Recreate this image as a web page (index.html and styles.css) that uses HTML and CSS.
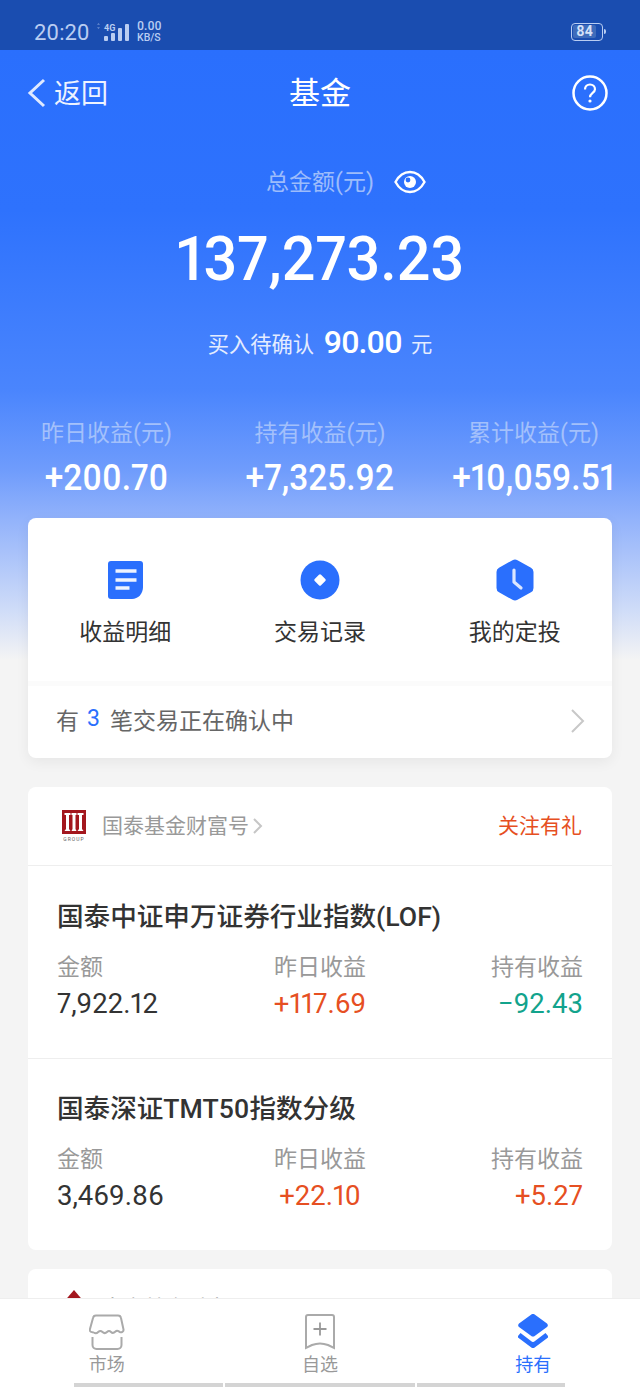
FILE: index.html
```html
<!DOCTYPE html>
<html lang="zh-CN">
<head>
<meta charset="utf-8">
<title>基金</title>
<link rel="stylesheet" href="styles.css">
</head>
<body>
<div class="phone">
  <div class="statusbar">
    <div class="status-left">
      <span class="clock">20:20</span>
      <svg class="signal" width="36" height="20" viewBox="0 0 36 20">
        <path class="sig-arrow" d="M1 2.800 2.500 1 4 2.800zM1 5.200 2.500 7 4 5.200z"/>
        <rect x="8" y="14" width="4" height="5" rx="1"/><rect x="15" y="11" width="4" height="8" rx="1"/><rect x="22" y="6" width="4" height="13" rx="1"/><rect x="29" y="2" width="4" height="17" rx="1"/>
        <text x="8" y="9" class="sig-text">4G</text>
      </svg>
      <span class="speed"><span>0.00</span><span class="speed-unit">KB/S</span></span>
    </div>
    <div class="battery"><span class="battery-level">84</span></div>
  </div>

  <main class="content">
    <header class="nav">
      <div class="nav-back">
        <svg width="20" height="30" viewBox="0 0 20 30"><path d="M18 2 4 15l14 13" fill="none" stroke="#dfe9ff" stroke-width="3"/></svg>
        <span class="nudge-up">返回</span>
      </div>
      <div class="nav-title">基金</div>
      <svg class="nav-help" width="36" height="36" viewBox="0 0 36 36">
        <circle cx="18" cy="18" r="16.500" fill="none" stroke="#fff" stroke-width="2.500"/>
        <path d="M13 14.500c0-3 2.200-5 5-5s5 2 5 4.700c0 3.600-5 3.800-5 8" fill="none" stroke="#fff" stroke-width="2.200"/>
        <circle cx="18" cy="26" r="1.600" fill="#fff"/>
      </svg>
    </header>

    <section class="summary">
      <div class="total-label">
        <span class="nudge-up">总金额(元)</span>
        <svg width="32" height="26" viewBox="0 0 32 26">
          <path d="M1.500 13C5 6.500 10 3 16 3s11 3.500 14.500 10C27 19.500 22 23 16 23S5 19.500 1.500 13z" fill="none" stroke="#fff" stroke-width="2.400"/>
          <circle cx="16" cy="13" r="6" fill="#fff"/><circle cx="14" cy="11" r="2.400" fill="#2a6ffd"/>
        </svg>
      </div>
      <div class="amount"><span class="amount-num">137,273.23</span></div>
      <div class="pending"><span>买入待确认</span><span class="pending-num">90.00</span><span>元</span></div>
    </section>

    <section class="stats">
      <div class="stat"><div class="stat-label">昨日收益(元)</div><div class="stat-value"><span>+200.70</span></div></div>
      <div class="stat"><div class="stat-label">持有收益(元)</div><div class="stat-value"><span>+7,325.92</span></div></div>
      <div class="stat"><div class="stat-label">累计收益(元)</div><div class="stat-value"><span>+10,059.51</span></div></div>
    </section>

    <section class="card actions-card">
      <div class="actions">
        <div class="action">
          <svg width="38" height="42" viewBox="-1 0 38 42"><path d="M4 2h29a3 3 0 0 1 3 3v23c0 7-5 12-11 12H4a3 3 0 0 1-3-3V5a3 3 0 0 1 3-3z" fill="#2a6ffd"/><path d="M8.500 12h21M8.500 21h21M8.500 29h14" stroke="#fff" stroke-width="3.400" opacity=".92"/></svg>
          <span>收益明细</span>
        </div>
        <div class="action">
          <svg width="40" height="42" viewBox="0 0 40 42"><circle cx="20" cy="21" r="19.500" fill="#2a6ffd"/><rect x="15.500" y="16.500" width="9" height="9" rx="1.500" fill="#fff" transform="rotate(45 20 21)"/></svg>
          <span>交易记录</span>
        </div>
        <div class="action">
          <svg width="38" height="42" viewBox="0 0 38 42"><path d="M16.500 1.200a5 5 0 0 1 5 0l13.500 7.600a5 5 0 0 1 2.500 4.400v15.600a5 5 0 0 1-2.500 4.400l-13.500 7.600a5 5 0 0 1-5 0L3 33.200A5 5 0 0 1 .5 28.800V13.200A5 5 0 0 1 3 8.800z" fill="#2a6ffd"/><path d="M18 11v12l7 6" fill="none" stroke="#dbe6ff" stroke-width="3.200" stroke-linecap="round" stroke-linejoin="round"/></svg>
          <span>我的定投</span>
        </div>
      </div>
      <div class="confirm-row">
        <span class="confirm-text nudge-up">有<b class="confirm-count">3</b>笔交易正在确认中</span>
        <svg width="16" height="26" viewBox="0 0 16 26"><path d="M2 2l11 11L2 24" fill="none" stroke="#c8c8c8" stroke-width="2"/></svg>
      </div>
    </section>

    <section class="card fund-card">
      <div class="card-head">
        <div class="brand">
          <svg class="logo" width="26" height="32" viewBox="0 0 26 32">
            <rect x="1" y="0" width="24" height="24" fill="#a3171e"/>
            <path d="M3.500 3h6v2H8v14l1.500 2h-6L5 19V5H3.500zM10.500 3h5v2H14.500v14l1 2h-5l1-2V5h-1zM16.500 3h6v2H21v14l1.500 2h-6l1.500-2V5h-1.500z" fill="#fff"/>
            <text x="13" y="31" class="logo-text">GROUP</text>
          </svg>
          <span class="brand-name nudge-up">国泰基金财富号</span>
          <svg class="brand-arrow" width="12" height="18" viewBox="0 0 12 18"><path d="M2 2l7 7-7 7" fill="none" stroke="#c6c6c6" stroke-width="2"/></svg>
        </div>
        <span class="follow nudge-up">关注有礼</span>
      </div>
      <article class="fund">
        <h2 class="fund-title">国泰中证申万证券行业指数(LOF)</h2>
        <div class="fund-grid">
          <div class="col"><span class="col-label">金额</span><span class="col-value">7,922.12</span></div>
          <div class="col col-mid"><span class="col-label">昨日收益</span><span class="col-value up">+117.69</span></div>
          <div class="col col-end"><span class="col-label">持有收益</span><span class="col-value down">−92.43</span></div>
        </div>
      </article>
      <article class="fund fund-last">
        <h2 class="fund-title">国泰深证TMT50指数分级</h2>
        <div class="fund-grid">
          <div class="col"><span class="col-label">金额</span><span class="col-value">3,469.86</span></div>
          <div class="col col-mid"><span class="col-label">昨日收益</span><span class="col-value up">+22.10</span></div>
          <div class="col col-end"><span class="col-label">持有收益</span><span class="col-value up">+5.27</span></div>
        </div>
      </article>
    </section>

    <section class="card peek-card">
      <div class="card-head">
        <div class="brand">
          <svg class="logo logo-peek" width="26" height="30" viewBox="0 0 26 30"><path d="M13 0l12 14-12 14L1 14z" fill="#a3171e"/></svg>
          <span class="brand-name nudge-up">南方基金财富号</span>
        </div>
      </div>
    </section>
  </main>

  <nav class="tabbar">
    <div class="tabs">
      <div class="tab">
        <svg width="36" height="36" viewBox="0 0 36 36"><path d="M7 1.500h22a3 3 0 0 1 3 2.500l2.500 11.500c.4 2-2 3.500-4 2.300-1.500-1-2.500-1.800-4-.3s-3 2-4.500.5-2.500-1.500-4 0-3 1.500-4.500 0-2.800-1.500-4.300 0-3 1.500-4.500.5c-1-.8-3.700.7-4-2.500L4 4a3 3 0 0 1 3-2.500z" fill="none" stroke="#aaa" stroke-width="2"/><path d="M3.500 23v8a4 4 0 0 0 4 4h21a4 4 0 0 0 4-4v-8" fill="none" stroke="#aaa" stroke-width="2"/></svg>
        <span>市场</span>
      </div>
      <div class="tab">
        <svg width="36" height="36" viewBox="0 0 36 36"><path d="M6 1h24a2 2 0 0 1 2 2v31l-6-3c-5-2-11-2-16 0l-6 3V3a2 2 0 0 1 2-2z" fill="none" stroke="#aaa" stroke-width="2"/><path d="M18 8.500v13M11.500 15h13" fill="none" stroke="#999" stroke-width="1.800"/></svg>
        <span>自选</span>
      </div>
      <div class="tab tab-active">
        <svg width="36" height="36" viewBox="-3 0 36 36"><path d="M13 .8a3 3 0 0 1 4 0L29 9.500a2.500 2.500 0 0 1 0 3.500L17 21.700a3 3 0 0 1-4 0L1 13a2.500 2.500 0 0 1 0-3.500z" fill="#2a6ffd"/><path d="M0 22l2.500-3L13 27a3 3 0 0 0 4 0l10.500-8 2.500 3v1.500L17 33.200a3 3 0 0 1-4 0L0 23.500z" fill="#2a6ffd"/></svg>
        <span>持有</span>
      </div>
    </div>
    <div class="home-bars"><i class="bar-a"></i><i class="bar-b"></i><i class="bar-c"></i></div>
  </nav>
</div>
</body>
</html>
```

FILE: styles.css
```css
* { box-sizing: border-box; }
html, body { margin: 0; padding: 0; }
body { font-family: Roboto, "Noto Sans CJK SC", sans-serif; background: #f4f4f4; font-variant-numeric: proportional-nums; }
.phone { width: 640px; height: 1387px; display: flex; flex-direction: column; overflow: hidden; }
.nudge-up { padding-bottom: 4px; }

.statusbar { height: 50px; flex: none; background: #1a4db0; color: #b9cdf2; display: flex; justify-content: space-between; align-items: center; padding: 20px 37px 6px 34px; }
.status-left { display: flex; align-items: center; }
.clock { font-size: 22px; width: 62px; }
.signal { fill: #b9cdf2; margin-right: 5px; }
.sig-arrow { opacity: .5; }
.sig-text { font-size: 9px; font-weight: 700; }
.speed { display: flex; flex-direction: column; font-size: 12px; line-height: 11px; font-weight: 500; }
.speed-unit { font-size: 10.500px; }
.battery { width: 32px; height: 18px; border: 1.500px solid #b9cdf2; border-radius: 4px; padding: 1px; position: relative; }
.battery::after { content: ""; position: absolute; right: -4px; top: 5px; width: 2px; height: 5px; background: #b9cdf2; border-radius: 0 2px 2px 0; }
.battery-level { display: block; width: 23px; height: 13px; background: #3f6cbb; border-radius: 2px; color: #d5e1f8; font-size: 14px; line-height: 13px; font-weight: 700; text-align: center; }

.content { flex: 1; min-height: 0; overflow: hidden; background: linear-gradient(180deg, #2a6ffd 0, #2e72fd 160px, #4a85fd 340px, #6f9cfc 420px, #93b3fb 470px, #cfdcf8 560px, #f4f4f4 610px); }

.nav { height: 86px; display: flex; align-items: center; justify-content: space-between; padding: 0 32px 0 26px; position: relative; color: #fff; }
.nav-back { display: flex; align-items: center; gap: 8px; font-size: 27px; color: #eef3ff; }
.nav-title { position: absolute; left: 0; right: 0; text-align: center; font-size: 31px; padding-bottom: 5px; }
.nav-help { position: relative; }

.summary { display: flex; flex-direction: column; align-items: center; }
.total-label { margin-top: 29px; height: 34px; display: flex; align-items: center; gap: 20px; font-size: 23px; color: #9dbcfb; padding-left: 52px; }
.amount { margin-top: 19px; height: 80px; display: flex; align-items: center; justify-content: center; color: #fff; }
.amount-num { display: inline-block; font-size: 62px; font-weight: 500; transform: scaleX(.958); }
.pending { margin-top: 24px; height: 40px; display: flex; align-items: center; gap: 9.500px; font-size: 21.300px; color: #e4ecff; }
.pending-num { font-size: 32px; font-weight: 500; letter-spacing: -1.200px; color: #fff; }

.stats { margin-top: 56px; display: grid; grid-template-columns: 213px 214px 213px; padding: 0; }
.stat { display: flex; flex-direction: column; align-items: center; gap: 6px; }
.stat-label { font-size: 23px; line-height: 32px; color: #a3c0fb; }
.stat-value { font-size: 36px; line-height: 44px; color: #fff; font-weight: 500; white-space: nowrap; }
.stat-value span { display: inline-block; transform: scaleX(.93); }

.card { margin: 18px 28px 0; background: #fff; border-radius: 8px; }
.actions-card { height: 240px; box-shadow: 0 4px 14px rgba(0, 0, 0, .06); display: flex; flex-direction: column; }
.actions { height: 168px; display: grid; grid-template-columns: repeat(3, 1fr); padding-top: 41px; border-bottom: 5px solid #fbfbfb; }
.action { display: flex; flex-direction: column; align-items: center; gap: 12px; font-size: 23px; color: #333; }
.action svg { height: 42px; }
.confirm-row { flex: 1; display: flex; align-items: center; justify-content: space-between; padding: 0 26px 3px 28px; font-size: 23px; color: #666; }
.confirm-text { display: flex; align-items: center; gap: 8px; }
.confirm-count { font-weight: 400; color: #2a6ffd; margin-right: 2px; }

.fund-card { margin-top: 29px; }
.peek-card { margin-top: 19px; }
.card-head { height: 79px; display: flex; align-items: center; justify-content: space-between; padding: 0 30px 0 33px; border-bottom: 1px solid #eee; }
.brand { display: flex; align-items: center; font-size: 21px; color: #999; }
.logo { margin-right: 15px; }
.logo-peek { margin-bottom: 6px; }
.logo-text { font-size: 5px; fill: #666; text-anchor: middle; letter-spacing: 1px; }
.brand-arrow { margin-left: 3px; }
.follow { font-size: 21px; color: #e64f22; }

.fund { height: 193px; padding: 33px 29px 0; border-bottom: 1px solid #eee; }
.fund-last { height: 191px; padding-top: 32px; border-bottom: 0; }
.fund-title { margin: 0; font-size: 26.600px; line-height: 36px; font-weight: 500; color: #333; white-space: nowrap; }
.fund-grid { margin-top: 17px; display: grid; grid-template-columns: 1fr 1fr 1fr; }
.col { display: flex; flex-direction: column; gap: 2px; }
.col-mid { align-items: center; }
.col-end { align-items: flex-end; }
.col-label { font-size: 23px; line-height: 32px; color: #999; }
.col-value { font-size: 27.500px; line-height: 36px; color: #333; }
.up { color: #e64f22; }
.down { color: #12a38c; }

.tabbar { flex: none; height: 89px; background: #fff; border-top: 1px solid #eee; display: flex; flex-direction: column; }
.tabs { flex: 1; display: grid; grid-template-columns: repeat(3, 1fr); padding-top: 15px; }
.tab { display: flex; flex-direction: column; align-items: center; font-size: 18px; line-height: 24px; gap: 3px; color: #999; }
.tab-active { color: #2a6ffd; }
.home-bars { height: 4px; display: flex; gap: 2px; padding-left: 74px; }
.home-bars i { display: block; height: 4px; background: #d4d4d4; }
.bar-a { width: 149px; }
.bar-b { width: 190px; }
.bar-c { width: 148px; }
```
